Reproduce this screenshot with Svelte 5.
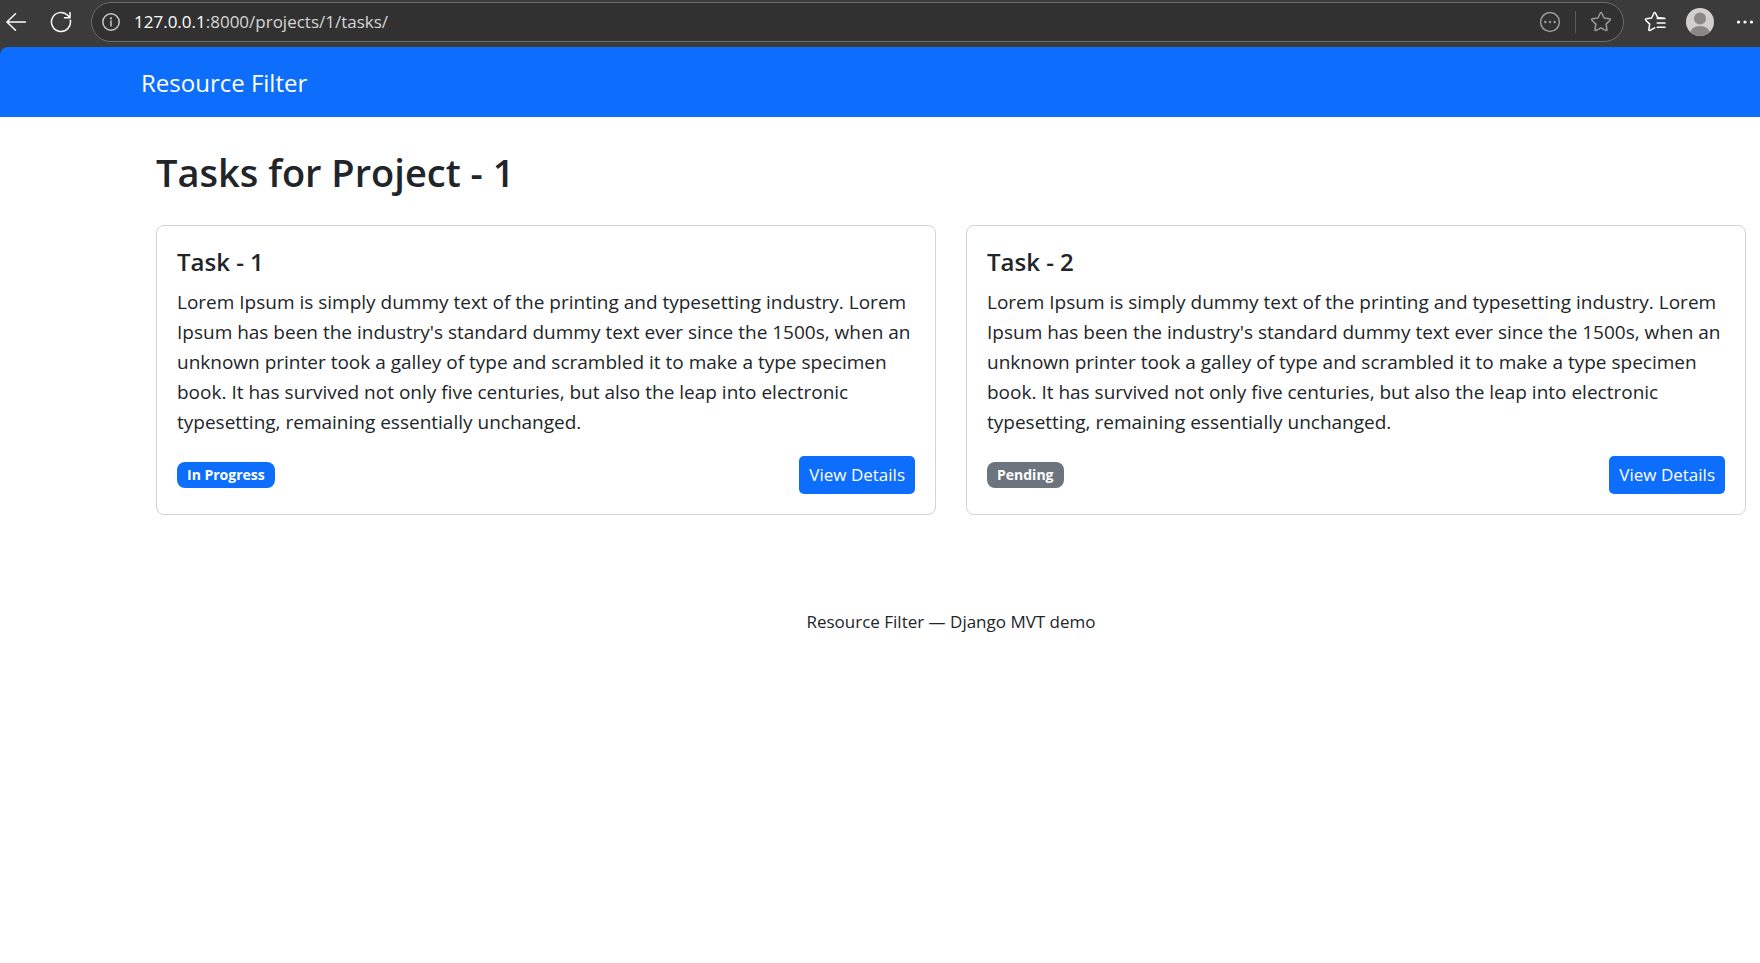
<script>
  const blurb =
    "Lorem Ipsum is simply dummy text of the printing and typesetting industry. Lorem Ipsum has been the industry's standard dummy text ever since the 1500s, when an unknown printer took a galley of type and scrambled it to make a type specimen book. It has survived not only five centuries, but also the leap into electronic typesetting, remaining essentially unchanged.";

  const tasks = [
    { id: 1, title: 'Task - 1', text: blurb, status: 'In Progress', tone: 'primary' },
    { id: 2, title: 'Task - 2', text: blurb, status: 'Pending', tone: 'secondary' }
  ];
</script>

<div class="toolbar">
  <button class="icon" aria-label="Back">
    <svg width="22" height="22" viewBox="0 0 22 22"><path d="M20.5 11H2M10.5 2.8 1.9 11l8.6 8.2" /></svg>
  </button>
  <button class="icon reload" aria-label="Refresh">
    <svg width="22" height="22" viewBox="0 0 22 22"><path d="M20.3 9.2A9.5 9.5 0 1 1 17.7 4.3l2 2.2M20 1.5v5.2h-5.5" /></svg>
  </button>
  <div class="address">
    <button class="icon dim" aria-label="Site information">
      <svg width="18" height="18" viewBox="0 0 18 18">
        <circle cx="9" cy="9" r="8.2" />
        <path d="M9 8v5" />
        <circle class="dot" cx="9" cy="5.4" r="1.1" />
      </svg>
    </button>
    <a class="url" href="#tasks"><b>127.0.0.1</b>:8000/projects/1/tasks/</a>
    <button class="icon faint" aria-label="More actions">
      <svg width="22" height="22" viewBox="0 0 22 22">
        <circle cx="11" cy="11" r="9.4" />
        <circle class="dot" cx="6.3" cy="11" r="1.2" />
        <circle class="dot" cx="11" cy="11" r="1.2" />
        <circle class="dot" cx="15.7" cy="11" r="1.2" />
      </svg>
    </button>
    <span class="rule"></span>
    <button class="icon faint" aria-label="Add to favorites">
      <svg width="22" height="22" viewBox="0 0 22 22">
        <path d="M10.3 2c.3-.6 1.1-.6 1.4 0l2.4 5 5.5.8c.7.1 1 .9.5 1.4l-4 3.9.9 5.5c.1.7-.6 1.2-1.2.8L11 16.8l-4.8 2.6c-.6.4-1.3-.1-1.2-.8l.9-5.5-4-3.9c-.5-.5-.2-1.3.5-1.4L7.9 7Z" />
      </svg>
    </button>
  </div>
  <button class="icon favorites" aria-label="Favorites">
    <svg width="22" height="22" viewBox="0 0 22 22">
      <path d="M20.5 7.3 13.7 6.6 11.4 2c-.3-.6-1.1-.6-1.4 0L7.6 7l-5.4.8c-.7.1-1 .9-.5 1.4l4 3.9-.9 5.5c-.1.7.6 1.2 1.2.8l4.7-2.6M13.2 7.6H21M13.2 11.9H21M13.2 16.2H21" />
    </svg>
  </button>
  <button class="icon profile" aria-label="Profile">
    <svg width="28" height="28" viewBox="0 0 28 28">
      <defs><clipPath id="face"><circle cx="14" cy="14" r="14" /></clipPath></defs>
      <g clip-path="url(#face)">
        <rect width="28" height="28" fill="#d2d0ce" />
        <circle cx="14" cy="10.6" r="6" fill="#8a8886" />
        <ellipse cx="14" cy="26" rx="10" ry="8" fill="#8a8886" />
      </g>
    </svg>
  </button>
  <button class="icon" aria-label="Settings and more">
    <svg width="18" height="18" viewBox="0 0 18 18">
      <circle class="dot" cx="2.5" cy="9" r="1.6" />
      <circle class="dot" cx="9" cy="9" r="1.6" />
      <circle class="dot" cx="15.5" cy="9" r="1.6" />
    </svg>
  </button>
</div>

<div class="view">
  <nav><a href="#home">Resource Filter</a></nav>

  <main id="tasks">
    <h1>Tasks for Project - 1</h1>
    <div class="cards">
      {#each tasks as task (task.id)}
        <article>
          <h2>{task.title}</h2>
          <p>{task.text}</p>
          <div class="actions">
            <span class="badge {task.tone}">{task.status}</span>
            <a class="button" href="#task-{task.id}">View Details</a>
          </div>
        </article>
      {/each}
    </div>
  </main>

  <footer>Resource Filter — Django MVT demo</footer>
</div>

<style>
  :global(body) {
    margin: 0;
    background: #fff;
    color: #212529;
    font-family: 'Segoe UI', 'Open Sans', 'Noto Sans', sans-serif;
    font-size: 19px;
    line-height: 30px;
  }

  .toolbar {
    display: flex;
    align-items: center;
    height: 47px;
    padding: 0 6px 3px 5px;
    box-sizing: border-box;
    background: #3b3b3b;
    color: #fff;
  }

  .icon {
    display: flex;
    flex: none;
    padding: 0;
    border: 0;
    background: none;
    color: #fff;
  }

  .icon svg {
    fill: none;
    stroke: currentColor;
    stroke-width: 1.5;
    stroke-linecap: round;
    stroke-linejoin: round;
  }

  .icon .dot {
    fill: currentColor;
    stroke: none;
  }

  .profile svg {
    stroke: none;
  }

  .dim {
    color: #c8c8c8;
  }

  .faint {
    color: #9a9a9a;
  }

  .reload {
    margin: 0 19px 0 23px;
  }

  .address {
    display: flex;
    flex: 1;
    align-items: center;
    box-sizing: border-box;
    height: 40px;
    padding: 0 11px 0 10px;
    border: 1px solid #6b6b6b;
    border-radius: 20px;
    background: #313131;
  }

  .url {
    flex: 1;
    margin-left: 14px;
    color: #d6d6d6;
    font-size: 17px;
    text-decoration: none;
  }

  .url b {
    color: #fff;
    font-weight: 400;
  }

  .rule {
    width: 1px;
    height: 22px;
    margin: 0 14px;
    background: #5c5c5c;
  }

  .favorites {
    margin: 0 20px;
  }

  .profile {
    margin-right: 22px;
  }

  .view {
    background: #3b3b3b;
  }

  nav {
    display: flex;
    padding: 21px 141px 19px;
    border-top-left-radius: 8px;
    background: #0d6efd;
  }

  nav a {
    color: #fff;
    font-size: 24px;
    text-decoration: none;
  }

  main {
    padding: 31px 14px 0 156px;
    background: #fff;
  }

  h1 {
    margin: 0 0 29px;
    font-size: 38px;
    font-weight: 600;
    line-height: 48px;
  }

  .cards {
    display: grid;
    grid-template-columns: 1fr 1fr;
    gap: 30px;
  }

  article {
    padding: 21px 20px 20px;
    border: 1px solid #d3d3d4;
    border-radius: 8px;
  }

  h2 {
    margin: 0 0 10px;
    font-size: 24px;
    font-weight: 600;
  }

  p {
    margin: 0 0 19px;
  }

  .actions {
    display: flex;
    align-items: center;
    justify-content: space-between;
  }

  .badge {
    padding: 0 10px;
    border-radius: 8px;
    color: #fff;
    font-size: 14px;
    font-weight: 700;
    line-height: 26px;
  }

  .primary {
    background: #0d6efd;
  }

  .secondary {
    background: #6c757d;
  }

  .button {
    padding: 4px 10px;
    border-radius: 5px;
    background: #0d6efd;
    color: #fff;
    font-size: 17px;
    text-decoration: none;
  }

  footer {
    padding: 92px 14px 20px 156px;
    background: #fff;
    font-size: 17px;
    text-align: center;
  }
</style>
